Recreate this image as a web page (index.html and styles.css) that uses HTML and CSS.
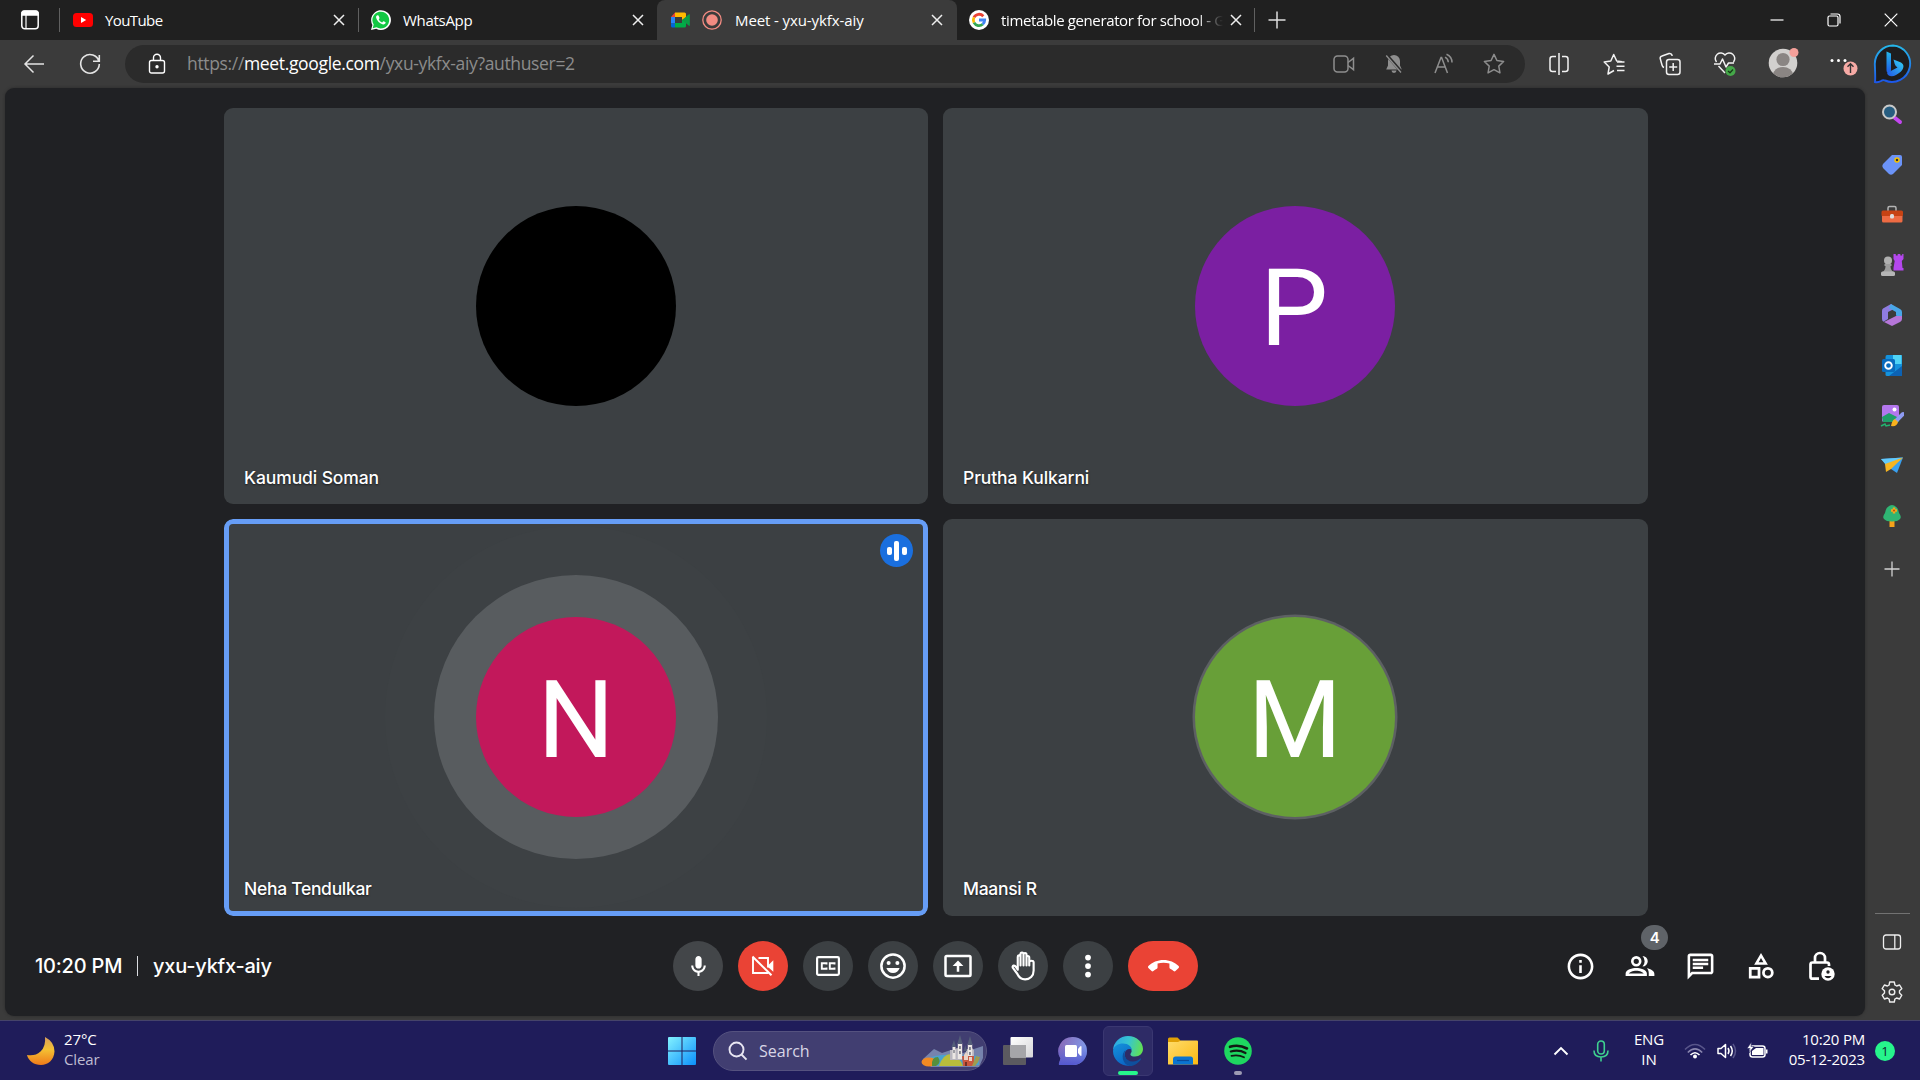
FILE: index.html
```html
<!DOCTYPE html>
<html lang="en">
<head>
<meta charset="utf-8">
<title>Meet - yxu-ykfx-aiy</title>
<link rel="stylesheet" href="styles.css">
</head>
<body>
<div class="desktop">
  <header class="tabstrip">
    <div class="workspaces"><svg width="20" height="24" viewBox="0 0 20 24" fill="none" stroke="#fff" stroke-width="1.5"><rect x="1.8" y="3.2" width="16.4" height="17.6" rx="3"/><path d="M2 4.5a2 2 0 0 1 2-1.5h12a2 2 0 0 1 2 1.500V7H2z" fill="#fff"/><path d="M6 7v13.500" stroke-width="1.200"/></svg></div>
    <div class="tab tab-yt">
      <svg width="20" height="20" viewBox="0 0 20 20"><rect y="3" width="20" height="14" rx="3.500" fill="#f00"/><path d="M8 7l5.200 3L8 13z" fill="#fff"/></svg>
      <span class="title t-yt">YouTube</span>
      <svg class="close" width="12" height="12" viewBox="0 0 12 12"><path d="M1 1l10 10M11 1L1 11"/></svg>
    </div>
    <div class="tab tab-wa">
      <svg width="20" height="20" viewBox="0 0 20 20"><path d="M0 20l1.400-5.100A9.900 9.900 0 1 1 5.200 18.700z" fill="#fff"/><path d="M1.700 18.300l1-3.700A8.400 8.400 0 1 1 5.500 17.300z" fill="#12c843"/><path d="M6.600 5.200c-.9.100-1.700 1.200-1.500 2.400.5 2.900 4 6.500 7 6.900 1.300.1 2.600-.8 2.600-1.900 0-.4-2-1.500-2.400-1.300-.5.300-.8 1.200-1.200 1.100-1.500-.5-2.700-1.700-3.300-3-.1-.3.800-.9.700-1.400-.2-.8-.8-2.600-1.300-2.800z" fill="#fff"/></svg>
      <span class="title t-wa">WhatsApp</span>
      <svg class="close" width="12" height="12" viewBox="0 0 12 12"><path d="M1 1l10 10M11 1L1 11"/></svg>
    </div>
    <div class="tab tab-meet">
      <svg width="19" height="20" viewBox="0 0 19 20"><path d="M0 7l4-4.500V7z" fill="#ea4335"/><path d="M4 2.500h9.500q1.500 0 1.500 1.500v5l-4 1V7H4z" fill="#ffba00"/><path d="M0 7h4v6.500H0z" fill="#2684fc"/><path d="M0 13.500h4v4H1.500Q0 17.500 0 16z" fill="#0066da"/><path d="M4 13h7v-3l4-1v7q0 1.500-1.500 1.500H4z" fill="#00ac47"/><path d="M11 10l7-5.800q.8-.5.800.5v10.600q0 1-.8.500z" fill="#0a9c45"/></svg>
      <svg class="rec" width="20" height="20" viewBox="0 0 20 20"><circle cx="10" cy="10" r="9.200" fill="none" stroke="#f28b82" stroke-width="1.300"/><circle cx="10" cy="10" r="5.800" fill="#f28b82"/></svg>
      <span class="title t-meet">Meet - yxu-ykfx-aiy</span>
      <svg class="close" width="12" height="12" viewBox="0 0 12 12"><path d="M1 1l10 10M11 1L1 11"/></svg>
    </div>
    <div class="tab tab-google">
      <svg width="20" height="20" viewBox="0 0 20 20" fill="none" stroke-width="2.800"><circle cx="10" cy="10" r="10" fill="#fff"/><path d="M14.300 6.200A5.700 5.700 0 0 0 5 7.300" stroke="#ea4335"/><path d="M5 7.300a5.800 5.800 0 0 0 0 5.400" stroke="#fbbc05"/><path d="M5 12.700a5.700 5.700 0 0 0 8.700 1.600" stroke="#34a853"/><path d="M10 10h5.700a5.700 5.700 0 0 1-2 4.300" stroke="#4285f4"/></svg>
      <span class="title t-google">timetable generator for school - G</span>
      <svg class="close" width="12" height="12" viewBox="0 0 12 12"><path d="M1 1l10 10M11 1L1 11"/></svg>
    </div>
    <div class="newtab"><svg width="18" height="18" viewBox="0 0 18 18"><path d="M9 .5v17M.5 9h17" stroke="#ddd" stroke-width="1.500"/></svg></div>
    <div class="winbtns">
      <span><svg width="14" height="14" viewBox="0 0 14 14"><path d="M.5 7h13" stroke="#fff" stroke-width="1.200"/></svg></span>
      <span><svg width="14" height="14" viewBox="0 0 14 14" fill="none" stroke="#fff" stroke-width="1.200"><rect x="1" y="3" width="10" height="10" rx="1.500"/><path d="M3.500 1h7Q13 1 13 3.500v7"/></svg></span>
      <span><svg width="14" height="14" viewBox="0 0 14 14"><path d="M.7.700l12.600 12.600M13.300.700L.7 13.300" stroke="#fff" stroke-width="1.200"/></svg></span>
    </div>
  </header>

  <div class="toolbar">
    <div class="nav"><svg width="22" height="20" viewBox="0 0 22 20" fill="none" stroke="#e4e4e4" stroke-width="1.500"><path d="M21 10H2M10.500 1.500L2 10l8.500 8.500"/></svg></div>
    <div class="nav nav2"><svg width="22" height="22" viewBox="0 0 22 22" fill="none" stroke="#e4e4e4" stroke-width="1.600"><path d="M20 8.500A9.300 9.300 0 1 0 20.300 11M20.300 2v6.300H14"/></svg></div>
    <div class="address">
      <svg class="lock" width="18" height="22" viewBox="0 0 18 22" fill="none" stroke="#fff" stroke-width="1.400"><rect x="1.500" y="7.500" width="15" height="12.500" rx="2"/><path d="M5.500 7.500V4.800a3.500 3.500 0 0 1 7 0v2.700"/><circle cx="9" cy="13.700" r="1" fill="#fff"/></svg>
      <span class="url"><i>https://</i><b>meet.google.com</b><i>/yxu-ykfx-aiy?authuser=2</i></span>
      <div class="addr-icons">
        <span><svg width="22" height="20" viewBox="0 0 22 20" fill="none" stroke="#8e8e8e" stroke-width="1.500"><rect x="1" y="2" width="14" height="16" rx="3.500"/><path d="M15 8.500l5.500-4.200v11.400L15 11.500"/></svg></span>
        <span><svg width="18" height="22" viewBox="0 0 18 22"><path d="M9 2a6 6 0 0 0-6 6v4.500L1.200 16.500h15.600L15 12.500V8a6 6 0 0 0-6-6zM6.500 17.500a2.500 2.500 0 0 0 5 0z" fill="#8e8e8e"/><path d="M1.700 2l14.800 17" stroke="#2b2b2b" stroke-width="3"/><path d="M1.200 2.500l14.800 17" stroke="#8e8e8e" stroke-width="1.400"/></svg></span>
        <span><svg width="22" height="22" viewBox="0 0 22 22" fill="none" stroke="#8e8e8e" stroke-width="1.500"><path d="M2 20L8 4.500h.6L14.500 20M4.500 14h7.500M12 4.200a6 6 0 0 1 3.300 5M13.500 1.200A9 9 0 0 1 19 9.500"/></svg></span>
        <span><svg width="22" height="22" viewBox="0 0 24 24" fill="none" stroke="#8e8e8e" stroke-width="1.600"><path d="M12 1.500l3.200 6.700 7.300 1-5.300 5.100 1.300 7.400L12 18.200l-6.500 3.500 1.300-7.400L1.500 9.200l7.300-1z" stroke-linejoin="round"/></svg></span>
      </div>
    </div>
    <div class="tool"><svg width="20" height="22" viewBox="0 0 20 22" fill="none" stroke="#f2f2f2" stroke-width="1.500"><path d="M7 3.500H3.500Q1 3.500 1 6v10q0 2.500 2.500 2.500H7M13 3.500h3.500Q19 3.500 19 6v10q0 2.500-2.500 2.500H13M10 0v22"/></svg></div>
    <div class="tool"><svg width="22" height="22" viewBox="0 0 22 22" fill="none" stroke="#f2f2f2" stroke-width="1.500" stroke-linejoin="round"><path d="M11 17.500l-6 3.500 1.200-7L1.200 9l6.600-1L10.700 1.500 13.700 8l5.300.700M14 9h7.500M13.500 13.200h8M14 17.500h7.500"/></svg></div>
    <div class="tool"><svg width="22" height="24" viewBox="0 0 22 24" fill="none" stroke="#f2f2f2" stroke-width="1.500" stroke-linejoin="round"><path d="M5 15.500Q3.500 15 3 13L1.200 6.500Q1 4.500 3 4L10 1.500Q12 1 13 3v1"/><rect x="7.500" y="7.500" width="13.500" height="15" rx="2.500"/><path d="M14.200 11v8M10.200 15h8"/></svg></div>
    <div class="tool"><svg width="22" height="24" viewBox="0 0 22 24" fill="none" stroke="#f2f2f2" stroke-width="1.500" stroke-linejoin="round"><path d="M2.500 10a5.500 5.500 0 0 1 8.500-7 5.500 5.500 0 0 1 8.500 7M4.500 14l6.500 7M0 12h6l2.500-5 3.500 8 2.500-4h5.500"/><circle cx="16.500" cy="19" r="5" fill="#45a849" stroke="none"/><path d="M14 19l2 1.800 3-3.300" stroke="#173a18" stroke-width="1.300"/></svg></div>
    <div class="profile"><svg width="34" height="34" viewBox="0 0 34 34"><defs><clipPath id="pf"><circle cx="15" cy="18" r="14.300"/></clipPath></defs><circle cx="15" cy="18" r="14.300" fill="#d2d0ce"/><g clip-path="url(#pf)" fill="#8a8583"><circle cx="15" cy="14.500" r="6.600"/><ellipse cx="15" cy="30" rx="10" ry="8"/></g><circle cx="26" cy="7.500" r="4.500" fill="#f4a09a"/></svg></div>
    <div class="more"><svg width="30" height="24" viewBox="0 0 30 24"><g fill="#fff"><circle cx="2" cy="7.500" r="1.500"/><circle cx="8.500" cy="7.500" r="1.500"/><circle cx="15" cy="7.500" r="1.500"/></g><circle cx="20.500" cy="15.500" r="7" fill="#f6aaa5"/><path d="M20.500 20v-9M17.500 13.700l3-3 3 3" stroke="#333" stroke-width="1.400" fill="none"/></svg></div>
  </div>

  <div class="body">
    <main class="call">
      <section class="tiles">
        <div class="tile"><div class="avatar black"></div><span class="name n1">Kaumudi Soman</span></div>
        <div class="tile"><div class="avatar purple">P</div><span class="name n2">Prutha Kulkarni</span></div>
        <div class="tile speaking"><div class="avatar pink">N</div><span class="name n3">Neha Tendulkar</span>
          <div class="voice"><i></i><i class="tall"></i><i></i></div></div>
        <div class="tile"><div class="avatar green">M</div><span class="name n4">Maansi R</span></div>
      </section>
      <footer class="controls">
        <div class="meeting"><span class="clock">10:20 PM</span><span class="bar"></span><span class="code">yxu-ykfx-aiy</span></div>
        <div class="buttons">
          <span class="btn lit"><svg width="25" height="25" viewBox="0 0 24 24" fill="#fff"><path d="M12 14c1.660 0 3-1.340 3-3V5c0-1.660-1.340-3-3-3S9 3.340 9 5v6c0 1.660 1.340 3 3 3zm5-3c0 2.760-2.240 5-5 5s-5-2.240-5-5H5c0 3.530 2.610 6.430 6 6.920V21h2v-3.080c3.390-.49 6-3.390 6-6.920h-2z"/></svg></span>
          <span class="btn red"><svg width="26" height="26" viewBox="0 0 26 26" fill="none" stroke="#fff" stroke-width="1.900"><path d="M8.500 5H18v9.500M3 4v16h15.500"/><path d="M18.500 12l4.800-4.800v11.600L18 14z" fill="#fff" stroke="none"/><path d="M2.500 3.500l19 18.800" stroke-width="2"/></svg></span>
          <span class="btn"><svg width="26" height="24" viewBox="0 0 26 24" fill="none" stroke="#fff" stroke-width="2.200"><rect x="2.100" y="3.100" width="21.800" height="17.800" rx="1.300"/><path d="M11.500 10.500V9.200H6.800v5.600h4.700v-1.300M19.500 10.500V9.200h-4.700v5.600h4.700v-1.300" stroke-width="1.900"/></svg></span>
          <span class="btn"><svg width="30" height="30" viewBox="0 0 24 24" fill="#fff"><path fill-rule="evenodd" d="M12 1.700a10.300 10.300 0 1 0 0 20.600 10.300 10.300 0 0 0 0-20.600zm0 2a8.300 8.300 0 1 1 0 16.600 8.300 8.300 0 0 1 0-16.600z"/><circle cx="8.500" cy="9.500" r="1.600"/><circle cx="15.500" cy="9.500" r="1.600"/><path d="M6.700 13.500h10.600c-.8 2.400-2.800 4-5.300 4s-4.500-1.600-5.300-4z"/></svg></span>
          <span class="btn"><svg width="30" height="30" viewBox="0 0 24 24" fill="#fff"><path fill-rule="evenodd" d="M3 3h18q2 0 2 2v14q0 2-2 2H3q-2 0-2-2V5q0-2 2-2zm0 2v14h18V5z"/><path d="M12 7.500L7.700 12H11v4.500h2V12h3.300z"/></svg></span>
          <span class="btn"><svg width="30" height="30" viewBox="0 0 24 24" fill="none" stroke="#fff" stroke-width="1.700" stroke-linejoin="round"><path d="M7.800 13.500V4.800q0-1.300 1.100-1.300T10 4.800V11.500 2.600Q10 1.200 11.200 1.200t1.200 1.400V11.500 2.900q0-1.300 1.200-1.300t1.200 1.300V11.500 5.300q0-1.300 1.100-1.300t1.100 1.300V11.500 9q0-1.200 1.700-1.200t1.800 1.200v6.500c0 4.500-3 7.200-6.800 7.200-3 0-5-1.500-6.300-4.500L3.800 13.300q-.4-1.300.7-1.600 1.100-.2 1.800 1l1.500 2.300z"/></svg></span>
          <span class="btn"><svg width="30" height="30" viewBox="0 0 24 24" fill="#fff"><circle cx="12" cy="5.200" r="2.300"/><circle cx="12" cy="12" r="2.300"/><circle cx="12" cy="18.800" r="2.300"/></svg></span>
          <span class="btn end"><svg width="31" height="31" viewBox="0 0 24 24" fill="#fff"><path d="M12 9c-1.600 0-3.150.25-4.600.72v3.100c0 .39-.23.74-.56.9-.98.490-1.870 1.120-2.660 1.850-.18.180-.43.280-.7.280-.28 0-.53-.11-.71-.29L.29 13.080c-.18-.17-.29-.42-.29-.7 0-.28.110-.53.290-.71C3.340 8.780 7.460 7 12 7s8.660 1.780 11.710 4.670c.180.180.290.430.290.710 0 .280-.110.530-.290.710l-2.480 2.480c-.180.180-.430.290-.710.290-.27 0-.52-.11-.7-.28-.79-.74-1.690-1.360-2.670-1.850-.33-.16-.56-.5-.56-.9v-3.100C15.150 9.250 13.600 9 12 9z"/></svg></span>
        </div>
        <div class="side-actions">
          <span><svg width="31" height="31" viewBox="0 0 24 24" fill="#fff"><path d="M11 7h2v2h-2zm0 4h2v6h-2zm1-9C6.480 2 2 6.480 2 12s4.480 10 10 10 10-4.480 10-10S17.520 2 12 2zm0 18c-4.410 0-8-3.590-8-8s3.590-8 8-8 8 3.590 8 8-3.590 8-8 8z"/></svg></span>
          <span><svg width="30" height="30" viewBox="0 0 24 24" fill="#fff"><path d="M9 4a4.200 4.200 0 1 0 0 8.400A4.200 4.200 0 0 0 9 4zm0 2.100a2.100 2.100 0 1 1 0 4.200 2.100 2.100 0 0 1 0-4.200zM14 4a4.200 4.200 0 1 1 0 8.400 6 6 0 0 0 0-8.400zM17.500 13.800c3 .6 6 2 6 4.500V20H19v-2.200c0-1.700-.5-3-1.500-4zM9 13.500c-3 0-8.500 1.300-8.500 4.500v2h17v-2c0-3.200-5.500-4.500-8.500-4.500zM3 18c.3-1 3.200-2.300 6-2.300s5.700 1.300 6 2.300z"/></svg><em class="count">4</em></span>
          <span><svg width="31" height="31" viewBox="0 0 24 24" fill="#fff"><path d="M4 4h16v12H5.170L4 17.170V4m0-2c-1.100 0-2 .9-2 2v18l4-4h14c1.100 0 2-.9 2-2V4c0-1.100-.9-2-2-2H4zm2 10h8v2H6v-2zm0-3h12v2H6V9zm0-3h12v2H6V6z"/></svg></span>
          <span><svg width="30" height="30" viewBox="0 0 24 24" fill="#fff"><path fill-rule="evenodd" d="M12 1.500L6.500 11h11zm0 4.100L13.900 9h-3.800zM2.300 12.700h9.200v9.300H2.300zm2.200 2.200v4.900h4.800v-4.900zM17.500 12.700a4.650 4.650 0 1 0 0 9.300 4.650 4.650 0 0 0 0-9.300zm0 2.200a2.450 2.450 0 1 1 0 4.900 2.450 2.450 0 0 1 0-4.900z"/></svg></span>
          <span><svg width="30" height="32" viewBox="0 0 30 32" fill="none" stroke="#fff" stroke-width="2.700"><path d="M13 28.700H6.500q-2 0-2-2V14.500q0-2 2-2H21q2 0 2 2V16M9 12.500V8a5 5 0 0 1 10 0v4.500"/><circle cx="22" cy="24" r="6.700" fill="#fff" stroke="none"/><circle cx="22" cy="22" r="1.700" fill="#202124" stroke="none"/><path d="M18.500 26h7q-1.200 2.200-3.500 2.200T18.500 26z" fill="#202124" stroke="none"/></svg></span>
        </div>
      </footer>
    </main>

    <aside class="sidebar">
      <div class="bing"><svg width="40" height="40" viewBox="0 0 40 40"><defs><linearGradient id="bg1" x1="0" y1="0" x2="0" y2="1"><stop offset="0" stop-color="#25b7ea"/><stop offset="1" stop-color="#1d57e8"/></linearGradient><linearGradient id="bg2" x1="0" y1="1" x2="1" y2="0"><stop offset="0" stop-color="#2055e5"/><stop offset="1" stop-color="#34d6f5"/></linearGradient></defs><path d="M20 1.500a18.200 18.200 0 1 1-8 35q-2-1-4 .5-3 1.800-6 1Q2.500 35 1.800 20A18.300 18.300 0 0 1 20 1.500z" fill="#1d1d1f" stroke="url(#bg1)" stroke-width="1.900"/><path d="M13.500 7.500l4.500 2v17l-1.500 3.500q-3-1-3-4z" fill="url(#bg1)"/><path d="M20.500 15.500l7.500 3q3.500 2 2 6-1 3-7 6.500-4.500 2.500-8 0l-1-2 10.500-5.500q-2-1-2.800-3.500z" fill="url(#bg2)"/></svg></div>
      <span><svg width="24" height="24" viewBox="0 0 24 24"><path d="M15 15l5 4" stroke="#c346f0" stroke-width="4" stroke-linecap="round"/><circle cx="9.500" cy="9" r="6.500" fill="#275d80" stroke="#c9c9c9" stroke-width="2"/></svg></span>
      <span><svg width="24" height="24" viewBox="0 0 24 24"><path d="M12 2h8q2 0 2 2v8L13 21q-2 1.500-4 0l-6-6q-1.500-2 0-4z" fill="#6b93f8"/><circle cx="17" cy="7" r="2" fill="#333" stroke="#f8c200" stroke-width="1.500"/></svg></span>
      <span><svg width="24" height="24" viewBox="0 0 24 24"><path d="M8 8V5q0-1.500 1.500-1.500h5Q16 3.500 16 5v3" fill="none" stroke="#b4b4b4" stroke-width="1.500"/><rect x="1.500" y="7.500" width="21.500" height="6" rx="1.500" fill="#c74314"/><path d="M2 13h20.500v5q0 1.500-1.500 1.500H3.500Q2 19.500 2 18z" fill="#ee6b43"/><rect x="10" y="11" width="4" height="4.500" rx="1.500" fill="#ddd"/></svg></span>
      <span><svg width="24" height="24" viewBox="0 0 24 24"><path d="M13.500 1h2.300v1.500h1.900V1h2.600v1.500h1.900V1h1.300v5l-1.700 2 .7 7h1v2.500H13.500V15l1.200-7-1.200-2z" fill="#b447ee"/><circle cx="8" cy="7.500" r="4" fill="#b0b0b0"/><path d="M4.500 11h7v2h-1q0 4 3 6h-11q3-2 3-6h-1z" fill="#9c9c9c"/><rect x="1" y="18.500" width="14" height="4.500" rx="1.500" fill="#b5b5b5"/></svg></span>
      <span><svg width="24" height="24" viewBox="0 0 24 24"><path d="M11 1L3 5.500Q2 6 2 8v8q0 2 1.500 2.800L8 16V9l8-4z" fill="#8f7ce0"/><path d="M11 1l9 5q2 1 2 3v7l-6-3.500V9L9 5z" fill="#49a6e8"/><path d="M22 13v3q0 2-2 3l-8 4-8-4 12-6z" fill="#b576d8"/></svg></span>
      <span><svg width="24" height="24" viewBox="0 0 24 24"><path d="M7 1h14q1 0 1 1v20H7q-1.500 0-1.500-1.500V3Q5.500 1 7 1z" fill="#1492dc"/><path d="M13 1h8.500v9H13z" fill="#4fd4f6"/><path d="M22 12v10H9z" fill="#0c62b4"/><rect x="2" y="5" width="13" height="13" rx="1.500" fill="#096bbd"/><circle cx="8.500" cy="11.500" r="3.300" fill="none" stroke="#fff" stroke-width="1.900"/></svg></span>
      <span><svg width="24" height="24" viewBox="0 0 24 24"><rect x="2" y="1" width="17" height="17" rx="2" fill="#b477ee"/><path d="M2 13l7-4 10 5v4H3z" fill="#1f9f68"/><circle cx="14.500" cy="5.500" r="2" fill="#fff"/><path d="M23 10l-8 8" stroke="#8e9bf3" stroke-width="4" stroke-linecap="round"/><path d="M15 15l3 3q-1 5-7 4 1-6 4-7z" fill="#f8b11d"/><path d="M1 22l4-2 1 2 4-1" stroke="#22b46f" stroke-width="1.500" fill="none"/></svg></span>
      <span><svg width="24" height="24" viewBox="0 0 24 24"><path d="M1 5l22-1.500L17 19l-6-4z" fill="#39a0ef"/><path d="M1 5l22-1.500L6 11z" fill="#63c9fa"/><path d="M6 18l-1-8L23 3.500 11 15z" fill="#f6b521"/></svg></span>
      <span><svg width="24" height="24" viewBox="0 0 24 24"><path d="M9.500 16h5v7h-5z" fill="#f4a21b"/><path d="M12 1q6 1 7 8 3 4 1 6-2 2.500-8 2.500T4 15q-2-2 1-6 1-7 7-8z" fill="#2fb573"/><path d="M14 3.500v6M11 6.500h6" stroke="#f7a51e" stroke-width="2.500"/><circle cx="14" cy="6.500" r="1" fill="#b54c08"/></svg></span>
      <span class="add"><svg width="16" height="16" viewBox="0 0 16 16"><path d="M8 .5v15M.5 8h15" stroke="#d2d2d2" stroke-width="1.300"/></svg></span>
      <hr>
      <span class="panel"><svg width="20" height="18" viewBox="0 0 20 18" fill="none" stroke="#eee" stroke-width="1.300"><rect x="1.500" y="2" width="17" height="14" rx="2.500"/><path d="M12.800 2v14"/></svg></span>
      <span class="gear"><svg width="24" height="24" viewBox="0 0 24 24" fill="none" stroke="#eee" stroke-width="1.400" stroke-linejoin="round"><path d="M9.700 2h4.600l.6 3 1.700 1 3-1 2.200 3.700-2.300 2.100v2.300l2.300 2.100-2.200 3.800-3-1-1.700 1-.6 3H9.700l-.6-3-1.700-1-3 1-2.200-3.800 2.300-2.100v-2.300L2.200 8.700 4.400 5l3 1 1.700-1z"/><circle cx="12" cy="12" r="2.800"/></svg></span>
    </aside>
  </div>

  <div class="taskbar">
    <div class="weather">
      <svg width="30" height="30" viewBox="0 0 30 30"><defs><linearGradient id="mn" x1="0" y1="0" x2="0" y2="1"><stop offset="0" stop-color="#d9a05c"/><stop offset=".45" stop-color="#f4c033"/><stop offset="1" stop-color="#ef7a1a"/></linearGradient></defs><path d="M19 1q9.500 5 9.500 14.500C28 24 22 29 15 29 8 29 2.500 25 1 19q8 1.500 13.500-3.500T19 1z" fill="url(#mn)"/></svg>
      <p><span class="w1">27°C</span><span class="w2">Clear</span></p>
    </div>
    <div class="start"><svg width="30" height="30" viewBox="0 0 30 30"><defs><linearGradient id="wn" x1="0" y1="0" x2="1" y2="1"><stop offset="0" stop-color="#83f2ff"/><stop offset="1" stop-color="#0b8ffb"/></linearGradient></defs><path d="M1 2q0-1 1-1h12.500v13.500H1zM15.500 1H28q1 0 1 1v12.500H15.500zM1 15.500h13.500V29H2q-1 0-1-1zM15.500 15.500H29V28q0 1-1 1H15.500z" fill="url(#wn)"/></svg></div>
    <div class="search">
      <svg width="20" height="20" viewBox="0 0 20 20" fill="none" stroke="#e8e6f2" stroke-width="1.900"><circle cx="8.500" cy="8.500" r="7"/><path d="M13.500 13.500l5 5.200"/></svg>
      <span class="search-text">Search</span>
      <svg class="castle" width="62" height="32" viewBox="0 0 62 32"><path d="M2 24L13 14l8 4 9-3 12 3 8-3 12-4v12l-4 9H10z" fill="#7683ad"/><path d="M5 24q12-5 26-4l27 1v9l-20 1H14z" fill="#4aa3cf"/><path d="M18 31q4-12 12-12 8 2 12 12z" fill="#b9bd3c"/><path d="M29 15h4l3-2 5 2v10H29zM45 15l5-3 3 3v10h-8z" fill="#b9b6bf"/><path d="M31.500 12h3v12h-3zM36.800 8h4.400v16h-4.400zM46.800 9h4.400v14h-4.400z" fill="#ece7e4"/><path d="M30.500 12l2.500-7 2 7zM36.300 9L39 0l2.700 9zM46.300 10L49 1l2.700 9zM42.500 16l1.800-6 1.700 6z" fill="#535d79"/><path d="M38.300 11h1.300v3h-1.300zM38.300 16h1.300v3h-1.300zM32.500 15h1v3h-1zM48.300 12h1.300v3h-1.300zM48.300 17h1.300v3h-1.300z" fill="#545869"/><path d="M41 21h12v10H42z" fill="#c9573f"/><path d="M43 20l2-3 2 3v5h-4zM48 22h3v4h-3z" fill="#ead2c6"/><path d="M44 27h2v4h-2z" fill="#743025"/><path d="M51 31l4-10 4 1q-1 5-5 9z" fill="#a09b50"/><ellipse cx="8" cy="27" rx="7.500" ry="4.500" fill="#f28a22"/><path d="M11 31q-1-9 6-9 4 6-2 9z" fill="#568f3c"/></svg>
    </div>
    <div class="apps">
      <span class="app"><svg width="30" height="28" viewBox="0 0 30 28"><defs><linearGradient id="tv" x1="0" y1="0" x2="1" y2="1"><stop offset="0" stop-color="#fff"/><stop offset="1" stop-color="#d5d5d8"/></linearGradient></defs><rect y="8" width="23" height="20" rx="1" fill="#5b5a60"/><rect x="7.500" width="22.500" height="20.500" rx="1" fill="url(#tv)"/><path d="M7.500 8H23v12.500H7.500z" fill="#a5a5a9"/></svg></span>
      <span class="app"><svg width="30" height="30" viewBox="0 0 30 30"><defs><linearGradient id="ch" x1="0" y1="0" x2="1" y2=".4"><stop offset="0" stop-color="#8a64b2"/><stop offset="1" stop-color="#7f9ceb"/></linearGradient><linearGradient id="ch2" x1="0" y1="0" x2="0" y2="1"><stop offset=".3" stop-color="#5558cf" stop-opacity="0"/><stop offset="1" stop-color="#5357cf"/></linearGradient></defs><path d="M15 1a14 14 0 1 1 0 28H1.500q-1-.5-.5-1.500l1.500-5A14 14 0 0 1 15 1z" fill="url(#ch)"/><path d="M15 1a14 14 0 1 1 0 28H1.500q-1-.5-.5-1.500l1.500-5A14 14 0 0 1 15 1z" fill="url(#ch2)"/><rect x="7" y="9" width="12" height="12" rx="1.500" fill="#fff"/><path d="M20 13l2-2.500q1.500-1 1.500.5v8q0 1.500-1.500.5L20 17z" fill="#fff"/></svg></span>
      <span class="app active"><svg width="30" height="30" viewBox="0 0 30 30"><defs><linearGradient id="e1" x1="0" y1=".3" x2="1" y2=".5"><stop offset="0" stop-color="#2ba6e4"/><stop offset=".5" stop-color="#37c5d0"/><stop offset="1" stop-color="#62e052"/></linearGradient><linearGradient id="e2" x1="0" y1="0" x2=".5" y2="1"><stop offset="0" stop-color="#1593dc"/><stop offset="1" stop-color="#0b66c4"/></linearGradient></defs><path d="M0 14A15 15 0 0 1 15 0c8.500 0 15 6 15 13 0 4.500-3.500 7.500-8 7.500-4 0-5.500-1.500-4-3.500 2-3-1-7.500-6-7.500C6 9.500 1.500 11 0 14z" fill="url(#e1)"/><path d="M0 15c.5-5 5-7.500 10-7.500 5.500 0 9 3.500 9 7-2-2.800-6.800-1.300-7.300 3.500-.4 5 5.300 12.500 8 11.200C11 32 0 25.500 0 15z" fill="url(#e2)"/><path d="M13 13.500c-3 3.500-1.500 12 7 12 3 0 6-1.500 7.300-3 .5-.3 1 .2.700.7C25 28 20 30 16.500 30 9.500 28.500 7 18 13 13.500z" fill="#0e4f9d"/></svg></span>
      <span class="app"><svg width="30" height="28" viewBox="0 0 30 28"><defs><linearGradient id="fo" x1="0" y1="0" x2="1" y2="1"><stop offset="0" stop-color="#ffdc6b"/><stop offset="1" stop-color="#fcb912"/></linearGradient></defs><path d="M0 2q0-1.500 1.500-1.500h8L13 4v5H0z" fill="#e0a006"/><path d="M0 5h10l3-1.500h16q1 0 1 1V27q0 .5-.5.5H.5Q0 27.500 0 27z" fill="url(#fo)"/><path d="M5 27.500V22q0-2.500 2.500-2.500h15Q25 19.500 25 22v5.500z" fill="#0b74cf"/><path d="M9 23.500h12" stroke="#0a4b9a" stroke-width="1.200"/></svg></span>
      <span class="app idle"><svg width="28" height="28" viewBox="0 0 28 28"><circle cx="14" cy="14" r="13.800" fill="#1ed760"/><g fill="none" stroke="#121a14" stroke-linecap="round"><path d="M6 9.800q9-2.600 17 1.700" stroke-width="2.600"/><path d="M6.800 14.500q8-2.200 14.700 1.500" stroke-width="2.200"/><path d="M7.500 18.800q7-1.500 12.500 1.500" stroke-width="1.800"/></g></svg></span>
    </div>
    <div class="tray">
      <span class="s-chev"><svg width="16" height="10" viewBox="0 0 16 10"><path d="M1.500 8.500L8 2l6.500 6.500" fill="none" stroke="#fff" stroke-width="1.900"/></svg></span>
      <span class="s-mic"><svg width="16" height="22" viewBox="0 0 16 22" fill="none" stroke="#3ed08f" stroke-width="1.600"><rect x="4.700" y="1" width="6.600" height="13" rx="3.300"/><path d="M1 10.500q0 6.500 7 6.500t7-6.500M8 17v4.500"/></svg></span>
      <p class="lang"><span>ENG</span><span>IN</span></p>
      <span class="s-wifi"><svg width="22" height="18" viewBox="0 0 22 18" fill="none" stroke-width="1.600"><path d="M1 7.500q10-10 20 0" stroke="#58558a"/><path d="M3.800 10.500q7.200-7.200 14.400 0" stroke="#8985ae"/><path d="M6.500 13q4.500-4.500 9 0" stroke="#fff"/><circle cx="11" cy="14.500" r="2" fill="#fff"/></svg></span>
      <span class="s-vol"><svg width="20" height="18" viewBox="0 0 20 18" fill="none" stroke="#fff" stroke-width="1.500"><path d="M1 6.500h3L8.500 2.500v13L4 11.500H1z" stroke-linejoin="round"/><path d="M11 6q2 3 0 6M13.500 4q3.500 5 0 10"/><path d="M16 2q5 7 0 14" stroke="#58558a"/></svg></span>
      <span class="s-bat"><svg width="22" height="18" viewBox="0 0 22 18"><rect x="3" y="4" width="15" height="11" rx="2.500" fill="none" stroke="#fff" stroke-width="1.500"/><path d="M5 12V9l4-3h7.500v7H5zM19 7.500h1.500v4H19z" fill="#fff"/><path d="M4.500 0L0 6.500h3L2 11l5-6.500H4z" fill="#fff" stroke="#1f1c5a" stroke-width=".6"/></svg></span>
      <p class="date"><span class="d1">10:20 PM</span><span class="d2">05-12-2023</span></p>
      <em class="notif">1</em>
    </div>
  </div>
</div>
</body>
</html>
```
FILE: styles.css
```css
* { box-sizing: border-box; }
body { margin: 0; overflow: hidden; background: #3b3b3b; color: #fff; font-family: "Open Sans", "Noto Sans", sans-serif; }
svg { display: block; flex: none; }
p { margin: 0; }
em, i { font-style: normal; }
.desktop { width: 1920px; height: 1080px; display: flex; flex-direction: column; }

/* tab strip */
.tabstrip { height: 40px; flex: none; display: flex; background: #202020; }
.workspaces { width: 60px; display: flex; align-items: center; justify-content: center; }
.workspaces, .tab-yt, .tab-google { background: linear-gradient(#606060, #606060) right 8px / 1px 24px no-repeat; background-position: right 8px; }
.tab { height: 40px; display: flex; align-items: center; white-space: nowrap; font-size: 15px; line-height: 20px; }
.tab .title { margin-left: 12px; flex: 1; padding-bottom: 1px; }
.tab .close { stroke: #eee; stroke-width: 1.500; fill: none; }
.tab-yt { width: 299px; padding: 0 14px 0 13px; }
.tab-wa { width: 298px; padding: 0 13px 0 12px; }
.tab-meet { width: 300px; padding: 0 14px; background: #3b3b3b; border-radius: 8px 8px 0 0; }
.tab-google { width: 298px; padding: 0 13px 0 12px; }
.t-yt { letter-spacing: -.6px; }
.t-wa { letter-spacing: -.3px; }
.tab .t-meet { margin-left: 13px; letter-spacing: -.1px; }
.rec { margin-left: 12px; }
.t-google { letter-spacing: -.37px; -webkit-mask-image: linear-gradient(90deg, #000 196px, transparent 222px); mask-image: linear-gradient(90deg, #000 196px, transparent 222px); }
.newtab { width: 44px; display: flex; align-items: center; justify-content: center; }
.winbtns { margin-left: auto; display: flex; padding-right: 1px; }
.winbtns span { width: 57px; display: flex; align-items: center; justify-content: center; }

/* toolbar */
.toolbar { height: 48px; flex: none; display: flex; align-items: center; padding-left: 6px; }
.nav { width: 56px; display: flex; justify-content: center; }
.nav2 { margin-right: 7px; }
.address { width: 1400px; height: 38px; margin-bottom: 1px; background: #2b2b2b; border-radius: 19px; display: flex; align-items: center; padding-left: 23px; margin-right: 6px; }
.url { margin-left: 21px; padding-bottom: 1px; font-size: 17.500px; letter-spacing: -.34px; white-space: nowrap; }
.url i { color: #8c8c8c; }
.url b { font-weight: 400; color: #fff; }
.addr-icons { margin-left: auto; display: flex; padding-right: 6px; }
.addr-icons span { width: 50px; display: flex; align-items: center; justify-content: center; }
.tool { width: 55.500px; display: flex; justify-content: center; }
.profile { width: 64px; display: flex; justify-content: center; padding: 0 1px 4px 0; }
.more { width: 56px; padding: 2px 0 0 13px; }

/* page and sidebar */
.body { height: 933px; flex: none; display: flex; padding-left: 5px; border-bottom: 1px solid #45436a; }
.call { width: 1860px; height: 928px; background: #202124; border-radius: 9px; display: flex; flex-direction: column; padding-top: 20px; box-shadow: 0 0 3px #2a2a2a; }
.tiles { display: grid; grid-template-columns: 704px 705px; grid-template-rows: 396px 397px; gap: 15px; margin-left: 219px; }
.tile { position: relative; background: #3c4043; border-radius: 9px; display: flex; align-items: center; justify-content: center; overflow: hidden; }
.speaking::after { content: ""; position: absolute; inset: 0; border: 5px solid #669df6; border-radius: 9px; }
.avatar { width: 200px; height: 200px; border-radius: 50%; display: flex; align-items: center; justify-content: center; padding-top: 3px; font: 400 108px/196px Roboto, sans-serif; }
.black { background: #000; }
.purple { background: #7b1fa2; margin-right: 1px; padding-right: 2px; }
.pink { background: #c2185b; margin-bottom: 1px; padding-top: 5px; box-shadow: 0 0 0 42px #585c5f, 0 0 0 91px #3d4144; }
.green { background: #689f38; margin: 0 1px 1px 0; padding-top: 5px; box-shadow: 0 0 0 2.500px #5d6063; }
.name { position: absolute; left: 20px; bottom: 14px; font: 500 17.500px/24px Inter, sans-serif; letter-spacing: -.1px; text-shadow: 0 1px 2px rgba(0,0,0,.6); white-space: nowrap; }
.n3, .n4 { letter-spacing: -.3px; bottom: 15px; }
.voice { position: absolute; right: 15px; top: 15px; width: 33px; height: 33px; border-radius: 50%; background: #1a6fdf; display: flex; align-items: center; justify-content: center; gap: 2.500px; }
.voice i { width: 5px; height: 8px; border-radius: 2px; background: #fff; }
.voice .tall { height: 20px; }

.controls { flex: 1; display: grid; grid-template-columns: 668px 525px 1fr; align-items: center; }
.meeting { display: flex; align-items: center; padding-left: 30px; font: 500 20px/24px Inter, sans-serif; letter-spacing: -.22px; white-space: nowrap; }
.clock { width: 102px; }
.bar { width: 1px; height: 20px; background: #dadce0; margin-right: 15px; }
.buttons { display: flex; gap: 15px; }
.btn { width: 50px; height: 50px; border-radius: 25px; background: #3c4043; display: flex; align-items: center; justify-content: center; flex: none; }
.lit { background: #434649; }
.red { background: #ea4335; }
.end { width: 70px; background: #ea4335; }
.side-actions { display: flex; justify-content: flex-end; padding-right: 14px; }
.side-actions span { width: 60.200px; height: 50px; display: flex; align-items: center; justify-content: center; position: relative; }
.count { position: absolute; left: 31px; top: -16px; width: 27px; height: 25px; border-radius: 13px; background: #5f6368; font: 600 15px/25px Inter, sans-serif; text-align: center; }

.sidebar { width: 55px; padding-right: 1px; display: flex; flex-direction: column; align-items: center; }
.bing { height: 1px; margin-top: -44px; margin-bottom: 45px; overflow: visible; margin-left: 2px; }
.sidebar span { height: 50.100px; width: 54px; display: flex; align-items: center; justify-content: center; flex: none; }
.sidebar .add { margin-top: 3px; }
.sidebar hr { width: 35px; height: 1px; border: 0; background: #727272; margin: auto 0 3px; flex: none; }
.sidebar .gear { margin-bottom: 3px; }

/* taskbar */
.taskbar { flex: 1; display: flex; align-items: center; background: #1f1c5a; font-size: 15px; line-height: 20px; white-space: nowrap; }
.weather { width: 656px; display: flex; align-items: center; padding-left: 26px; gap: 8px; }
.weather span, .lang span, .date span { display: block; }
.weather p, .lang, .date { padding-bottom: 3px; letter-spacing: -.1px; }
.w2 { color: #bfbdd2; }
.start { width: 57px; padding-left: 11px; }
.search { width: 274px; height: 40px; border-radius: 20px; background: #413e71; border: 1px solid #55527f; display: flex; align-items: center; padding-left: 14px; font-size: 16px; color: #d8d6e6; }
.search-text { margin-left: 11px; }
.castle { margin-left: auto; margin-right: 3px; }
.apps { display: flex; gap: 5px; margin-left: 6px; }
.app { width: 50px; height: 50px; border-radius: 6px; display: flex; align-items: center; justify-content: center; position: relative; }
.active { background: #2e2b66; border: 1px solid #3a3771; }
.active::after, .idle::after { content: ""; position: absolute; bottom: 0; width: 20px; height: 4px; border-radius: 2px; background: #26f58c; }
.idle::after { width: 8px; background: #9c9ab3; bottom: 1px; }
.tray { margin-left: auto; display: flex; align-items: center; padding-right: 25px; }
.tray > span { display: flex; justify-content: center; }
.s-chev { width: 40px; }
.s-mic { width: 40px; }
.lang { width: 56px; text-align: center; }
.s-wifi { width: 36px; }
.s-vol { width: 24px; margin-left: 2px; }
.s-bat { width: 38px; }
.date { width: 88px; text-align: right; margin-right: 10px; }
.date span { letter-spacing: -.2px; }
.notif { width: 20px; height: 20px; border-radius: 50%; background: #26f58c; color: #123; font-size: 13px; text-align: center; }
```
